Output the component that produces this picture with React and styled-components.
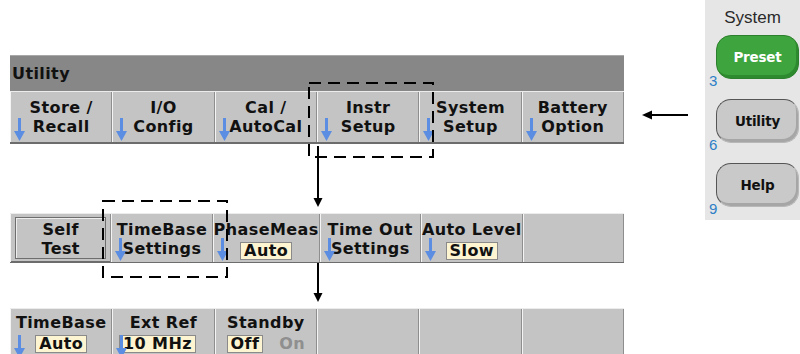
import React from "react";
import styled, { createGlobalStyle } from "styled-components";

const Global = createGlobalStyle`
  html, body { margin: 0; padding: 0; background: #ffffff; }
  body { font-family: "DejaVu Sans", "Liberation Sans", sans-serif; }
`;

const Page = styled.div`
  width: 800px;
  height: 354px;
  overflow: hidden;
  display: flex;
  align-items: flex-start;
  background: #ffffff;
`;

const Diagram = styled.div`
  position: relative;
  width: 624px;
  flex: none;
  box-sizing: border-box;
  padding: 55px 0 0 10px;
  display: flex;
  flex-direction: column;
`;

const MenuHeader = styled.div`
  height: 36px;
  box-sizing: border-box;
  background: #878787;
  border-top: 1px solid #a8a8a8;
  display: flex;
  align-items: center;
  padding-left: 2px;
  font: bold 16px/19px "DejaVu Sans", sans-serif;
  letter-spacing: 0.4px;
  color: #111;
`;

const KeyRow = styled.div`
  height: ${(p) => p.$h}px;
  box-sizing: border-box;
  display: grid;
  grid-template-columns: repeat(6, 1fr);
  border-top: 1px solid #ececec;
  border-bottom: 2px solid #6c6c6c;
  background: #c4c4c4;
`;

const Key = styled.div`
  position: relative;
  box-sizing: border-box;
  border-left: 1px solid #f4f4f4;
  border-right: 1px solid #8e8e8e;
  background: #c4c4c4;
  display: flex;
  flex-direction: column;
  align-items: center;
  padding-top: ${(p) => p.$pt ?? 5}px;
  font: bold 16px/19px "DejaVu Sans", sans-serif;
  letter-spacing: 0.4px;
  color: #111;
  white-space: nowrap;
`;

const Line = styled.div`
  display: flex;
  align-items: center;
  gap: 16px;
  margin-left: ${(p) => p.$shift ?? 0}px;
`;

const RaisedKey = styled.div`
  box-sizing: border-box;
  margin: 3px 4px;
  height: calc(100% - 6px);
  border: 1px solid #6e6e6e;
  box-shadow: inset 1px 1px 0 #ededed;
  display: flex;
  flex-direction: column;
  align-items: center;
  padding-top: 2px;
`;

const RaisedWrap = styled.div`
  box-sizing: border-box;
  border-left: 1px solid #f4f4f4;
  border-right: 1px solid #8e8e8e;
  display: flex;
  flex-direction: column;
  font: bold 16px/19px "DejaVu Sans", sans-serif;
  letter-spacing: 0.4px;
  color: #111;
`;

const Value = styled.span`
  display: inline-block;
  margin-top: 3px;
  padding: 0 3px;
  line-height: 16px;
  border: 1px solid #8a8a8a;
  background: #fdf5d2;
  color: #111;
`;

const Dim = styled.span`
  margin-top: 3px;
  line-height: 16px;
  color: #8f8f8f;
`;

const SoftArrowBox = styled.svg`
  position: absolute;
  left: 3px;
  bottom: 1px;
`;

const Connector = styled.div`
  height: ${(p) => p.$h}px;
  flex: none;
`;

const Overlay = styled.svg`
  position: absolute;
  left: 0;
  top: 0;
  pointer-events: none;
`;

const Gutter = styled.div`
  width: 81px;
  flex: none;
  padding-top: 109px;
`;

const Panel = styled.div`
  width: 95px;
  height: 220px;
  flex: none;
  box-sizing: border-box;
  background: #e6e6e6;
  padding: 8px 0 0 4px;
  display: flex;
  flex-direction: column;
  gap: 20px;
`;

const PanelTitle = styled.div`
  font: 17px/20px "Liberation Sans", Arial, sans-serif;
  color: #2a2a2a;
  text-align: center;
  padding-right: 4px;
  margin-bottom: -13px;
`;

const ButtonGroup = styled.div`
  display: flex;
  align-items: flex-end;
`;

const Num = styled.span`
  width: 7px;
  font: 15px/14px "Liberation Sans", Arial, sans-serif;
  color: #2d7fc6;
  margin-bottom: -9px;
`;

const HardButton = styled.div`
  width: 83px;
  height: 44px;
  box-sizing: border-box;
  border-radius: 15px;
  display: flex;
  align-items: center;
  justify-content: center;
  font: bold 13.5px/15px "DejaVu Sans", sans-serif;
  letter-spacing: -0.2px;
  background: ${(p) => (p.$green ? "#3ea53e" : "#c9c9c9")};
  color: ${(p) => (p.$green ? "#ffffff" : "#111111")};
  border: 1px solid ${(p) => (p.$green ? "#2c7f2c" : "#555555")};
  border-right-color: ${(p) => (p.$green ? "#2c7f2c" : "#b8b8b8")};
  border-bottom-color: ${(p) => (p.$green ? "#2c7f2c" : "#b8b8b8")};
  box-shadow: inset -2px -3px 0 ${(p) => (p.$green ? "#2e8a2e" : "#a6a6a6")};
`;

function BlueArrow() {
  return (
    <SoftArrowBox width="11" height="23" viewBox="0 0 11 23">
      <rect x="4" y="0" width="3" height="14" fill="#5b8de2" />
      <polygon points="0,13 11,13 5.5,23" fill="#5b8de2" />
    </SoftArrowBox>
  );
}

function DownArrow({ x, y1, y2 }) {
  return (
    <svg width="614" height={y2 + 1} style={{ display: "block" }}>
      <line x1={x} y1={y1} x2={x} y2={y2 - 6} stroke="#000" strokeWidth="2" />
      <polygon points={`${x - 4.5},${y2 - 9} ${x + 4.5},${y2 - 9} ${x},${y2}`} fill="#000" />
    </svg>
  );
}

function SoftKey({ lines, arrow, pt, shift }) {
  return (
    <Key $pt={pt}>
      {lines.map((l, i) => (
        <Line key={i} $shift={i === 1 ? shift : 0}>
          {l}
        </Line>
      ))}
      {arrow && <BlueArrow />}
    </Key>
  );
}

export default function App() {
  return (
    <Page>
      <Global />
      <Diagram>
        <MenuHeader>Utility</MenuHeader>
        <KeyRow $h={53}>
          <SoftKey lines={["Store /", "Recall"]} arrow pt={6} />
          <SoftKey lines={["I/O", "Config"]} arrow pt={6} />
          <SoftKey lines={["Cal /", "AutoCal"]} arrow pt={6} />
          <SoftKey lines={["Instr", "Setup"]} arrow pt={6} />
          <SoftKey lines={["System", "Setup"]} arrow pt={6} />
          <SoftKey lines={["Battery", "Option"]} arrow pt={6} />
        </KeyRow>
        <Connector $h={69}>
          <DownArrow x={308} y1={2} y2={63} />
        </Connector>
        <KeyRow $h={50}>
          <RaisedWrap>
            <RaisedKey>
              <Line>Self</Line>
              <Line>Test</Line>
            </RaisedKey>
          </RaisedWrap>
          <SoftKey lines={["TimeBase", "Settings"]} arrow pt={6} />
          <SoftKey lines={["PhaseMeas", <Value key="v">Auto</Value>]} arrow pt={6} />
          <SoftKey lines={["Time Out", "Settings"]} arrow pt={6} />
          <SoftKey lines={["Auto Level", <Value key="v">Slow</Value>]} arrow pt={6} />
          <Key />
        </KeyRow>
        <Connector $h={45}>
          <DownArrow x={308} y1={0} y2={39} />
        </Connector>
        <KeyRow $h={53}>
          <SoftKey lines={["TimeBase", <Value key="v">Auto</Value>]} arrow pt={4} />
          <SoftKey lines={["Ext Ref", <Value key="v">10 MHz</Value>]} arrow pt={4} shift={-12} />
          <SoftKey
            lines={[
              "Standby",
              <React.Fragment key="v">
                <Value>Off</Value>
                <Dim>On</Dim>
              </React.Fragment>,
            ]}
            pt={4}
          />
          <Key />
          <Key />
          <Key />
        </KeyRow>
        <Overlay width="624" height="354">
          <rect x="309" y="83" width="124" height="74" fill="none" stroke="#000" strokeWidth="2" strokeDasharray="12 7" />
          <rect x="103" y="201" width="124" height="76" fill="none" stroke="#000" strokeWidth="2" strokeDasharray="12 7" />
        </Overlay>
      </Diagram>
      <Gutter>
        <svg width="81" height="12" style={{ display: "block" }}>
          <line x1="26" y1="6" x2="64" y2="6" stroke="#000" strokeWidth="2" />
          <polygon points="18,6 28,1.5 28,10.5" fill="#000" />
        </svg>
      </Gutter>
      <Panel>
        <PanelTitle>System</PanelTitle>
        <ButtonGroup>
          <Num>3</Num>
          <HardButton $green>Preset</HardButton>
        </ButtonGroup>
        <ButtonGroup>
          <Num>6</Num>
          <HardButton>Utility</HardButton>
        </ButtonGroup>
        <ButtonGroup>
          <Num>9</Num>
          <HardButton>Help</HardButton>
        </ButtonGroup>
      </Panel>
    </Page>
  );
}
